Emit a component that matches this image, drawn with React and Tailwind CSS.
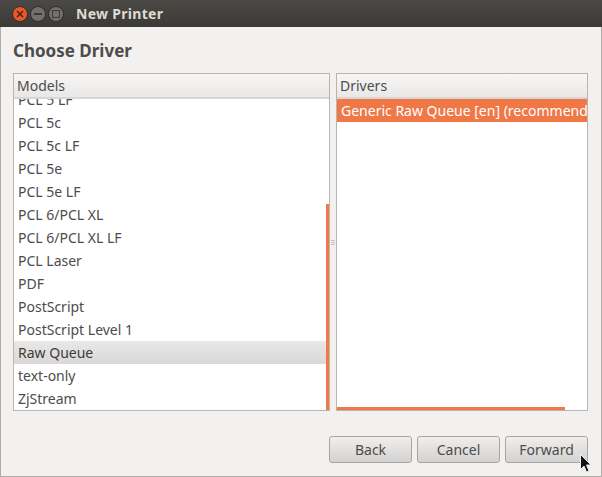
const models = ['PCL 5c', 'PCL 5c LF', 'PCL 5e', 'PCL 5e LF', 'PCL 6/PCL XL', 'PCL 6/PCL XL LF', 'PCL Laser', 'PDF', 'PostScript', 'PostScript Level 1'];

const ColumnHeader = ({ children }) => (
  <div className="h-[25px] shrink-0 flex items-center px-[3px] border-b-2 border-[#d8d6d3] bg-gradient-to-b from-[#f8f7f6] to-[#e9e8e6] text-[#4c4c4c]">
    {children}
  </div>
);

const WindowButton = ({ className, children }) => (
  <div className={`w-[16px] h-[16px] rounded-full flex items-center justify-center border border-[#2f2e2a] ${className}`}>
    {children}
  </div>
);

const Button = ({ children }) => (
  <button className="w-[83px] h-[27px] rounded-[3px] border border-[#a8a6a2] bg-gradient-to-b from-[#f0efee] to-[#d3d2d0] text-[#4c4c4c] flex items-center justify-center">
    {children}
  </button>
);

export default function App() {
  return (
    <div className="w-[602px] h-[477px] overflow-hidden relative flex flex-col bg-[#f2f1f0] text-[14px] font-['Noto_Sans',sans-serif]">
      {/* title bar */}
      <div className="h-[27px] shrink-0 flex items-center pl-[12px] bg-gradient-to-b from-[#4a4945] to-[#3b3a36]">
        <div className="flex gap-[2px]">
          <WindowButton className="bg-[#e8582a]">
            <svg width="8" height="8" viewBox="0 0 8 8" stroke="#4a1c0c" strokeWidth="1.4"><path d="M1 1l6 6M7 1l-6 6" /></svg>
          </WindowButton>
          <WindowButton className="bg-[#72716c]">
            <div className="w-[8px] h-[2px] bg-[#3a3936]" />
          </WindowButton>
          <WindowButton className="bg-[#72716c]">
            <div className="w-[8px] h-[8px] border border-[#3a3936]" />
          </WindowButton>
        </div>
        <div className="ml-[12px] text-[#dfdbd2] font-bold tracking-[0.3px]">New Printer</div>
      </div>

      {/* body */}
      <div className="flex-1 min-h-0 flex flex-col border-l border-r border-b border-[#b0aea9] pl-[12px] pr-[13px]">
        <h1 className="mt-[12px] h-[24px] leading-[24px] text-[17px] font-bold text-[#4c4c4c]">Choose Driver</h1>

        <div className="mt-[10px] h-[338px] flex">
          {/* models */}
          <div className="w-[317px] relative flex flex-col border border-[#b8b6b1] bg-white">
            <ColumnHeader>Models</ColumnHeader>
            <div className="flex-1 min-h-0 overflow-hidden text-[#4c4c4c]">
              <div className="h-[12px] relative overflow-hidden">
                <div className="absolute bottom-0 left-[4px] leading-[23px] h-[23px] whitespace-nowrap">PCL 5 LF</div>
              </div>
              {models.map((m) => (
                <div key={m} className="h-[23px] leading-[23px] pl-[4px]">{m}</div>
              ))}
              <div className="h-[23px] leading-[23px] pl-[4px] bg-gradient-to-b from-[#e9e8e6] to-[#d9d8d6] text-[#3c3c3c]">Raw Queue</div>
              <div className="h-[23px] leading-[23px] pl-[4px]">text-only</div>
              <div className="h-[23px] leading-[23px] pl-[4px]">ZjStream</div>
            </div>
            <div className="absolute right-0 bottom-0 top-[130px] w-[3px] bg-[#f0794a]" />
          </div>

          {/* pane handle */}
          <div className="w-[6px] flex flex-col items-center justify-center gap-[1px] pt-[1px]">
            <div className="w-[4px] h-px bg-[#c8c6c2]" />
            <div className="w-[4px] h-px bg-[#c8c6c2]" />
            <div className="w-[4px] h-px bg-[#c8c6c2]" />
          </div>

          {/* drivers */}
          <div className="w-[252px] relative flex flex-col border border-[#b8b6b1] bg-white">
            <ColumnHeader>Drivers</ColumnHeader>
            <div className="h-[23px] leading-[23px] pl-[4px] bg-[#f07746] text-white whitespace-nowrap overflow-hidden">
              Generic Raw Queue [en] (recommended)
            </div>
            <div className="absolute left-0 bottom-0 w-[228px] h-[3px] bg-[#f0794a]" />
          </div>
        </div>

        {/* buttons */}
        <div className="mt-[25px] flex justify-end gap-[5px]">
          <Button>Back</Button>
          <Button>Cancel</Button>
          <Button>Forward</Button>
        </div>
      </div>

      {/* mouse pointer */}
      <svg className="absolute left-[580px] top-[454px]" width="11" height="20" viewBox="0 0 11 20">
        <path d="M0.5 0.5v15l3.5-3.5 2.5 6 2.5-1-2.5-6h4.5z" fill="#111" stroke="#eee" strokeWidth="1" />
      </svg>
    </div>
  );
}
